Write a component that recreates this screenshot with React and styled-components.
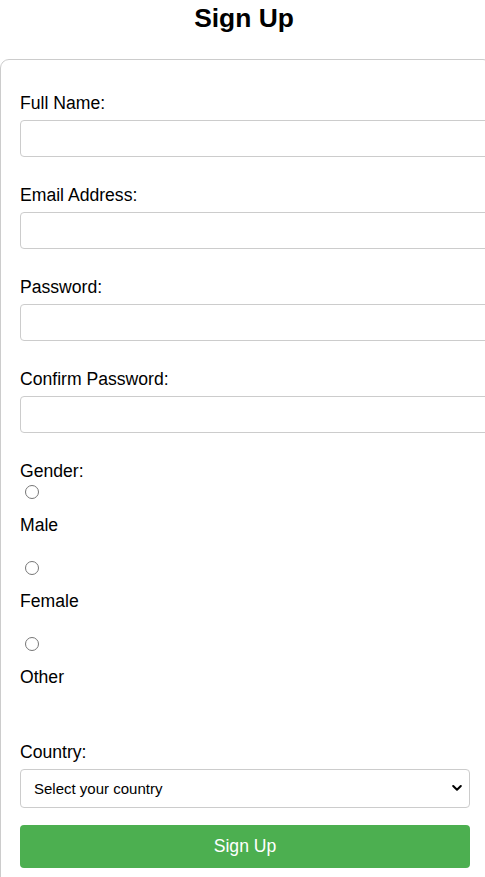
import React from 'react';
import styled, { createGlobalStyle } from 'styled-components';

const GlobalStyle = createGlobalStyle`
  html, body {
    margin: 0;
    padding: 0;
    overflow: hidden;
    background: #fff;
  }
  body {
    font-family: 'Liberation Sans', Arial, sans-serif;
    color: #000;
  }
`;

const Title = styled.h2`
  margin: 3px 0 26px;
  padding-left: 3px;
  line-height: 30px;
  font-size: 26.4px;
  font-weight: bold;
  text-align: center;
`;

const Form = styled.form`
  width: 451px;
  padding: 33px 20px 20px 19px;
  border: 1px solid #ccc;
  border-radius: 9px;
  background: #fff;
`;

const Field = styled.div`
  display: flex;
  flex-direction: column;
  align-items: flex-start;
  margin-bottom: ${(p) => p.$gap ?? 28}px;
`;

const Label = styled.label`
  display: block;
  font-size: 17.6px;
  line-height: 20px;
  margin-bottom: ${(p) => p.$gap ?? 7}px;
`;

const TextInput = styled.input`
  box-sizing: content-box;
  width: 100%;
  height: 19px;
  padding: 8px 10px;
  margin: 0;
  border: 1px solid #ccc;
  border-radius: 4px;
  font-size: 16px;
  font-family: inherit;
  background: #fff;
`;

const Radio = styled.input`
  width: 14px;
  height: 14px;
  margin: 4px 0 16px 5px;
  accent-color: #888;
`;

const OptionLabel = styled.label`
  display: block;
  font-size: 17.6px;
  line-height: 20px;
  margin-bottom: ${(p) => (p.$last ? 55 : 22)}px;
`;

const SelectWrap = styled.div`
  position: relative;
  width: 450px;
`;

const Select = styled.select`
  appearance: none;
  box-sizing: border-box;
  display: block;
  width: 100%;
  height: 39px;
  padding: 0 30px 0 13px;
  border: 1px solid #ccc;
  border-radius: 4px;
  font-size: 15px;
  font-family: inherit;
  color: #000;
  background: #fff;
`;

const Chevron = styled.svg`
  position: absolute;
  right: 8px;
  top: 15px;
  width: 10px;
  height: 8px;
  pointer-events: none;
`;

const Button = styled.button`
  display: block;
  box-sizing: border-box;
  width: 450px;
  height: 43px;
  margin-top: 17px;
  border: none;
  border-radius: 4px;
  background: #4caf50;
  color: #fff;
  font-size: 17.6px;
  font-family: inherit;
  cursor: pointer;
`;

const fields = [
  { id: 'name', label: 'Full Name:', type: 'text' },
  { id: 'email', label: 'Email Address:', type: 'email' },
  { id: 'password', label: 'Password:', type: 'password' },
  { id: 'confirm', label: 'Confirm Password:', type: 'password' },
];

const genders = ['Male', 'Female', 'Other'];

export default function App() {
  return (
    <>
      <GlobalStyle />
      <Title>Sign Up</Title>
      <Form onSubmit={(e) => e.preventDefault()}>
        {fields.map((f) => (
          <Field key={f.id}>
            <Label htmlFor={f.id}>{f.label}</Label>
            <TextInput id={f.id} type={f.type} />
          </Field>
        ))}

        <Field $gap={0}>
          <Label $gap={0}>Gender:</Label>
          {genders.map((g, i) => (
            <React.Fragment key={g}>
              <Radio type="radio" name="gender" id={g.toLowerCase()} />
              <OptionLabel htmlFor={g.toLowerCase()} $last={i === genders.length - 1}>
                {g}
              </OptionLabel>
            </React.Fragment>
          ))}
        </Field>

        <Field $gap={0}>
          <Label htmlFor="country">Country:</Label>
          <SelectWrap>
            <Select id="country" defaultValue="">
              <option value="">Select your country</option>
              <option value="us">United States</option>
              <option value="uk">United Kingdom</option>
              <option value="ca">Canada</option>
            </Select>
            <Chevron viewBox="0 0 10 8">
              <path d="M1.2 2 L5 5.8 L8.8 2" fill="none" stroke="#000" strokeWidth="2" strokeLinecap="round" strokeLinejoin="round" />
            </Chevron>
          </SelectWrap>
        </Field>

        <Button type="submit">Sign Up</Button>
      </Form>
    </>
  );
}
